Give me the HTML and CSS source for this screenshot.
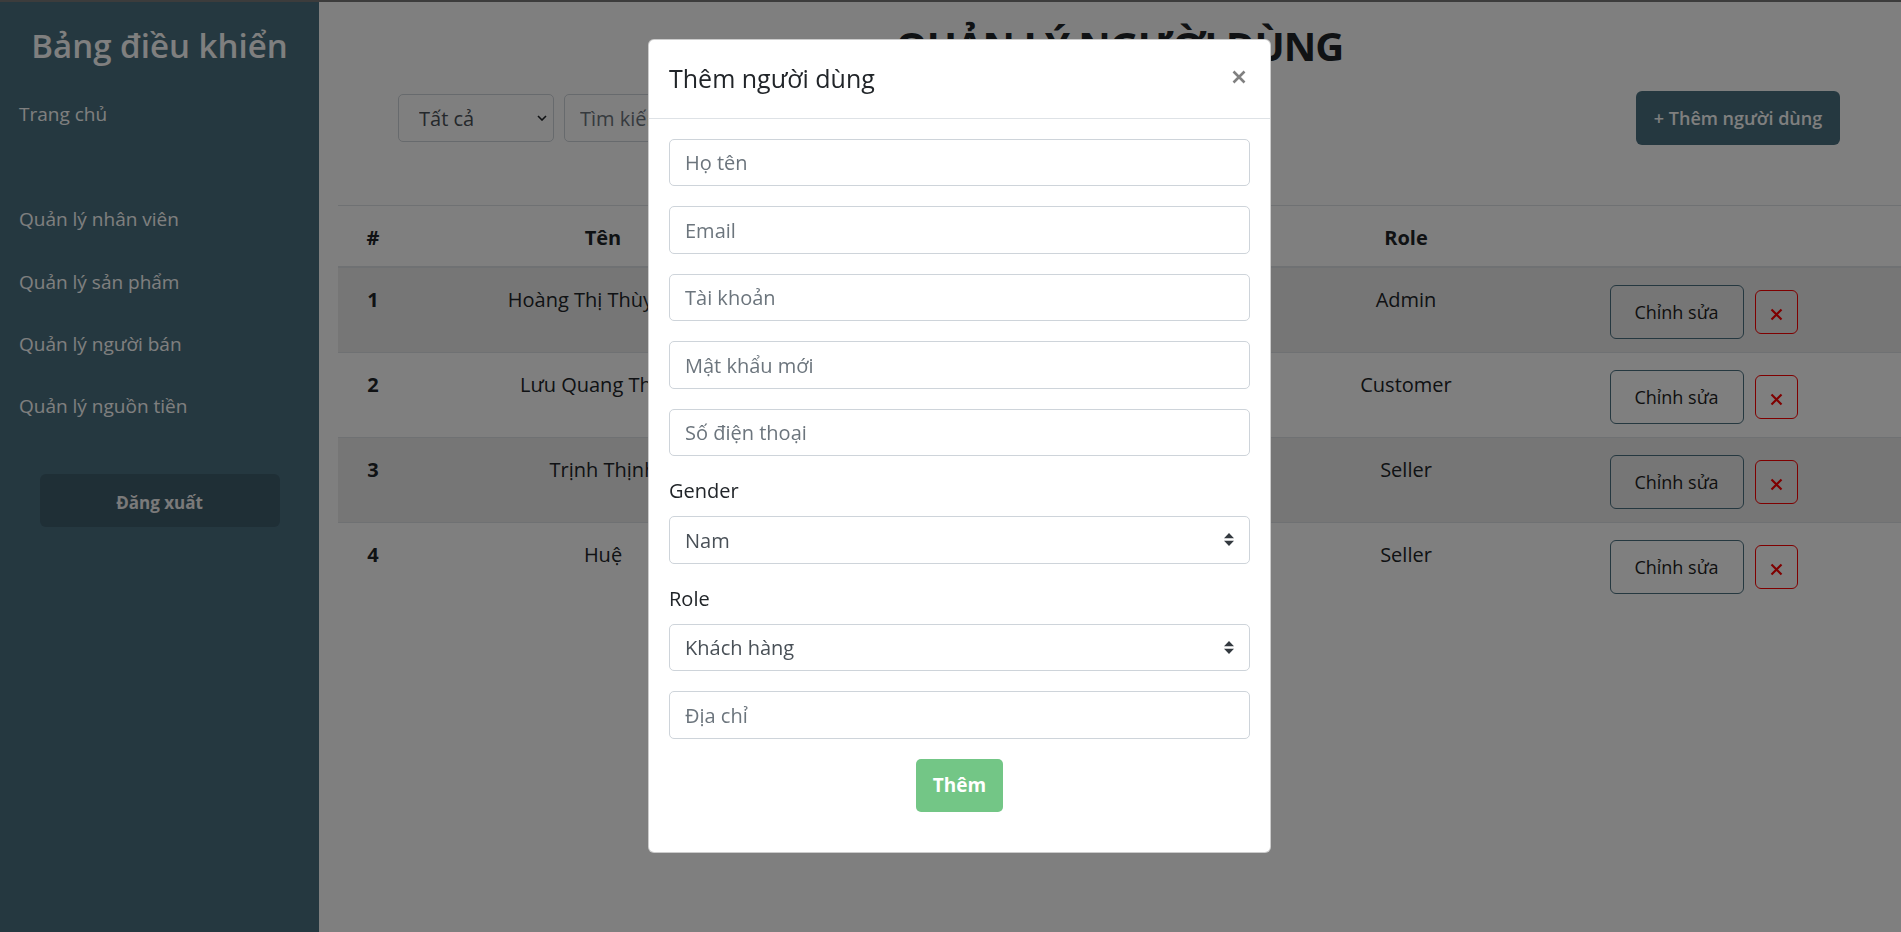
FILE: index.html
```html
<!DOCTYPE html>
<html lang="vi">
<head>
<meta charset="utf-8">
<title>Quản lý người dùng</title>
<link rel="stylesheet" href="styles.css">
</head>
<body>
<div class="app">
  <aside class="sidebar">
    <h3 class="brand">Bảng điều khiển</h3>
    <ul class="nav">
      <li class="nav-item nav-home">Trang chủ</li>
      <li class="nav-item">Quản lý nhân viên</li>
      <li class="nav-item">Quản lý sản phẩm</li>
      <li class="nav-item">Quản lý người bán</li>
      <li class="nav-item">Quản lý nguồn tiền</li>
    </ul>
    <button class="logout">Đăng xuất</button>
  </aside>

  <main class="main">
    <h2 class="page-title">QUẢN LÝ NGƯỜI DÙNG</h2>
    <div class="toolbar">
      <div class="filter">
        <select class="filter-select"><option>Tất cả</option></select>
        <svg class="chev" width="10" height="6" viewBox="0 0 10 6"><path d="M1 1l4 4 4-4" fill="none" stroke="#212529" stroke-width="1.6"/></svg>
      </div>
      <input class="search" type="text" placeholder="Tìm kiếm...">
      <button class="add-btn">+ Thêm người dùng</button>
    </div>

    <table class="users">
      <colgroup>
        <col class="c-no"><col class="c-name"><col class="c-email"><col class="c-phone"><col class="c-role"><col class="c-act">
      </colgroup>
      <thead>
        <tr><th>#</th><th>Tên</th><th>Email</th><th>Số điện thoại</th><th>Role</th><th></th></tr>
      </thead>
      <tbody>
        <tr>
          <th>1</th><td>Hoàng Thị Thùy Linh</td><td>thuylinh@gmail.com</td><td>0912345678</td><td>Admin</td>
          <td><div class="actions"><button class="edit-btn">Chỉnh sửa</button><button class="del-btn"><svg width="13" height="13" viewBox="0 0 13 13"><path d="M1.5 1.5l10 10M11.5 1.5l-10 10" stroke="red" stroke-width="2.2"/></svg></button></div></td>
        </tr>
        <tr>
          <th>2</th><td>Lưu Quang Thắng</td><td>quangthang@gmail.com</td><td>0987654321</td><td>Customer</td>
          <td><div class="actions"><button class="edit-btn">Chỉnh sửa</button><button class="del-btn"><svg width="13" height="13" viewBox="0 0 13 13"><path d="M1.5 1.5l10 10M11.5 1.5l-10 10" stroke="red" stroke-width="2.2"/></svg></button></div></td>
        </tr>
        <tr>
          <th>3</th><td>Trịnh Thịnh</td><td>trinhthinh@gmail.com</td><td>0901234567</td><td>Seller</td>
          <td><div class="actions"><button class="edit-btn">Chỉnh sửa</button><button class="del-btn"><svg width="13" height="13" viewBox="0 0 13 13"><path d="M1.5 1.5l10 10M11.5 1.5l-10 10" stroke="red" stroke-width="2.2"/></svg></button></div></td>
        </tr>
        <tr>
          <th>4</th><td>Huệ</td><td>hue@gmail.com</td><td>0934567890</td><td>Seller</td>
          <td><div class="actions"><button class="edit-btn">Chỉnh sửa</button><button class="del-btn"><svg width="13" height="13" viewBox="0 0 13 13"><path d="M1.5 1.5l10 10M11.5 1.5l-10 10" stroke="red" stroke-width="2.2"/></svg></button></div></td>
        </tr>
      </tbody>
    </table>
  </main>
</div>

<div class="backdrop"></div>

<div class="modal">
  <div class="modal-header">
    <h5 class="modal-title">Thêm người dùng</h5>
    <button class="close-btn"><svg width="14" height="14" viewBox="0 0 14 14"><path d="M1.5 1.5l11 11M12.5 1.5l-11 11" stroke="#808080" stroke-width="2.6"/></svg></button>
  </div>
  <div class="modal-body">
    <input class="field" type="text" placeholder="Họ tên">
    <input class="field" type="text" placeholder="Email">
    <input class="field" type="text" placeholder="Tài khoản">
    <input class="field" type="text" placeholder="Mật khẩu mới">
    <input class="field" type="text" placeholder="Số điện thoại">
    <label class="lbl">Gender</label>
    <div class="select-wrap">
      <select class="field field-select"><option>Nam</option></select>
      <svg class="updown" width="10" height="13" viewBox="0 0 4 5" preserveAspectRatio="none"><path d="M2 0L0 2h4zm0 5L0 3h4z" fill="#343a40"/></svg>
    </div>
    <label class="lbl">Role</label>
    <div class="select-wrap">
      <select class="field field-select"><option>Khách hàng</option></select>
      <svg class="updown" width="10" height="13" viewBox="0 0 4 5" preserveAspectRatio="none"><path d="M2 0L0 2h4zm0 5L0 3h4z" fill="#343a40"/></svg>
    </div>
    <input class="field" type="text" placeholder="Địa chỉ">
    <div class="submit-row"><button class="submit-btn">Thêm</button></div>
  </div>
</div>
</body>
</html>
```

FILE: styles.css
```css
* { box-sizing: border-box; }

html, body { margin: 0; height: 100%; }

body {
  font-family: "Open Sans", "Noto Sans", sans-serif;
  font-size: 20px;
  line-height: 1.5;
  color: #212529;
  background: #fff;
  border-top: 2px solid #787878;
  overflow: hidden;
}

button, input, select { font-family: inherit; }

.app { display: flex; height: 930px; }

/* Sidebar */
.sidebar {
  width: 319px;
  flex: none;
  background: #4a7080;
  color: #fff;
  display: flex;
  flex-direction: column;
}

.brand {
  margin: 23px 0 0;
  font-size: 33px;
  font-weight: 600;
  line-height: 42px;
  text-align: center;
}

.nav { list-style: none; margin: 16px 0 0; padding: 0 0 0 19px; }

.nav-item { padding: 16.15px 0; line-height: 30px; font-size: 19px; }

.nav-home { margin-bottom: 43px; }

.logout {
  margin: 37px auto 0;
  width: 240px;
  height: 53px;
  padding: 3px 0 0;
  border: 0;
  border-radius: 6px;
  background: #3e5e6c;
  color: #f4f4f4;
  font-size: 17px;
  font-weight: 700;
}

/* Main */
.main { flex: 1; min-width: 0; padding-left: 19px; }

.page-title {
  margin: 20px 0 0;
  font-size: 40px;
  font-weight: 700;
  line-height: 48px;
  letter-spacing: -1px;
  text-align: center;
}

.toolbar {
  margin-top: 21px;
  padding: 0 61px 0 60px;
  display: flex;
  align-items: center;
  height: 54px;
}

.filter { position: relative; width: 156px; height: 48px; }

.filter-select {
  appearance: none;
  -webkit-appearance: none;
  width: 100%;
  height: 100%;
  padding: 0 20px;
  border: 1px solid #ced4da;
  border-radius: 5px;
  background: #fff;
  color: #495057;
  font-size: 20px;
}

.chev { position: absolute; right: 7px; top: 21px; pointer-events: none; }

.search {
  margin-left: 10px;
  width: 320px;
  height: 48px;
  padding: 0 15px;
  border: 1px solid #ced4da;
  border-radius: 5px;
  font-size: 20px;
}

.search::placeholder { color: #6c757d; }

.add-btn {
  margin-left: auto;
  height: 54px;
  width: 204px;
  padding: 0;
  border: 0;
  border-radius: 6px;
  background: #4a7080;
  color: #fff;
  font-size: 18px;
  font-weight: 600;
}

/* Table */
.users {
  margin-top: 60px;
  width: 100%;
  table-layout: fixed;
  border-collapse: separate;
  border-spacing: 0;
}

.c-no { width: 70px; }
.c-name { width: 390px; }
.c-email { width: 254px; }
.c-phone { width: 254px; }
.c-role { width: 200px; }

.users th, .users td {
  padding: 17px 15px 13px;
  text-align: center;
  vertical-align: top;
  border-top: 1px solid #dee2e6;
  line-height: 30px;
  white-space: nowrap;
}

.users thead th { border-bottom: 2px solid #dee2e6; font-weight: 700; }

.users tbody tr:first-child th,
.users tbody tr:first-child td { border-top: 0; }

.users tbody tr:nth-child(odd) { background: rgba(0, 0, 0, 0.07); }

.users tbody th { font-weight: 700; }

.actions { display: flex; justify-content: center; align-items: center; gap: 11px; }

.edit-btn {
  width: 134px;
  height: 54px;
  border: 1px solid #4a7080;
  border-radius: 6px;
  background: transparent;
  color: #1e1e1e;
  font-size: 18px;
  font-weight: 500;
}

.del-btn {
  width: 43px;
  height: 44px;
  border: 1px solid red;
  border-radius: 6px;
  background: transparent;
  padding: 5px 0 0;
  display: flex;
  align-items: center;
  justify-content: center;
}

/* Backdrop + modal */
.backdrop {
  position: fixed;
  inset: 0;
  background: rgba(0, 0, 0, 0.5);
  z-index: 1;
}

.modal {
  position: fixed;
  left: 648px;
  top: 39px;
  width: 623px;
  background: #fff;
  border: 1px solid rgba(0, 0, 0, 0.2);
  border-radius: 6px;
  z-index: 2;
}

.modal-header {
  display: flex;
  align-items: center;
  justify-content: space-between;
  padding: 20px;
  border-bottom: 1px solid #dee2e6;
}

.modal-title { margin: 0; font-size: 25px; font-weight: 500; line-height: 37.5px; }

.close-btn {
  border: 0;
  background: transparent;
  padding: 0;
  margin: 0 4px 4px 0;
  display: flex;
}

.modal-body { padding: 20px; }

.field {
  display: block;
  width: 100%;
  height: 47.5px;
  margin-bottom: 20px;
  padding: 1px 15px 0;
  border: 1px solid #ced4da;
  border-radius: 5px;
  background: #fff;
  color: #495057;
  font-size: 20px;
}

.field::placeholder { color: #6c757d; }

.lbl { display: block; margin-bottom: 10px; line-height: 30px; }

.select-wrap { position: relative; }

.field-select { appearance: none; -webkit-appearance: none; }

.updown { position: absolute; right: 16px; top: 17px; pointer-events: none; }

.submit-row { text-align: center; margin-bottom: 20px; }

.submit-btn {
  height: 53px;
  padding: 0 17px;
  border: 0;
  border-radius: 5px;
  background: #73c686;
  color: #fff;
  font-size: 19px;
  font-weight: 700;
}
```
